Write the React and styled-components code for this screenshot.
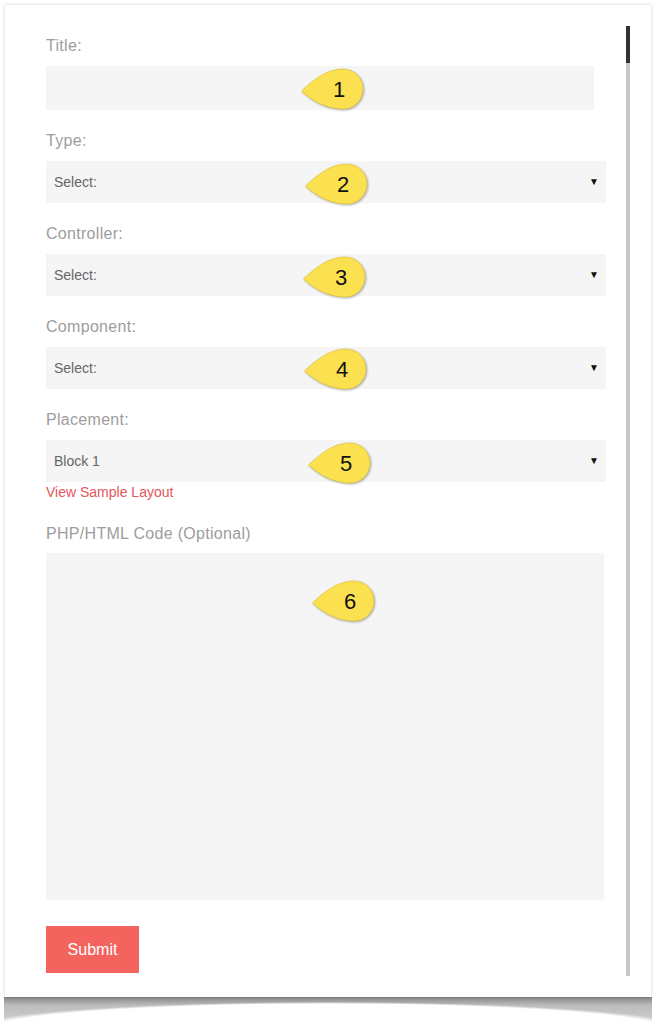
import React from 'react';
import styled, { createGlobalStyle } from 'styled-components';

const GlobalStyle = createGlobalStyle`
  html, body {
    margin: 0;
    padding: 0;
    background: #ffffff;
  }

  body {
    font-family: "Liberation Sans", Arial, sans-serif;
  }
`;

const Page = styled.div`
  padding: 5px 13px 30px 5px;
`;

const Card = styled.div`
  position: relative;
  width: 646px;
  box-sizing: border-box;
  display: flex;
  gap: 20px;
  padding: 21px 21px 21px 41px;
  background: #ffffff;
  box-shadow: 0 0 3px rgba(0, 0, 0, 0.22);

  /* curled paper shadow under the card */
  &::after {
    content: '';
    position: absolute;
    top: 100%;
    left: -1px;
    right: -1px;
    height: 24px;
    background: linear-gradient(
      to bottom,
      rgba(0, 0, 0, 0.48),
      rgba(0, 0, 0, 0.26) 35%,
      rgba(0, 0, 0, 0.2)
    );
    -webkit-mask-image: radial-gradient(ellipse 360px 27px at 50% 32px, transparent 93%, #000 100%);
    mask-image: radial-gradient(ellipse 360px 27px at 50% 32px, transparent 93%, #000 100%);
  }
`;

const FormColumn = styled.form`
  width: 560px;
  display: flex;
  flex-direction: column;
  padding: 10px 0 3px;
`;

const Field = styled.div`
  display: flex;
  flex-direction: column;
  margin-bottom: ${p => p.$gap}px;
`;

const Label = styled.label`
  font-size: 16px;
  line-height: 20px;
  letter-spacing: 0.3px;
  color: #9d9d9d;
  margin-bottom: ${p => p.$space || 10}px;
`;

const Control = styled.div`
  position: relative;
  box-sizing: border-box;
  width: ${p => p.$width}px;
  height: ${p => p.$height}px;
  background: #f5f5f5;
  display: flex;
  align-items: center;
  justify-content: space-between;
  padding: 0 7px 0 8px;
  font-size: 14px;
  color: #666666;
`;

const Arrow = styled.span`
  font-size: 10px;
  color: #111111;
  margin-top: -2px;
`;

const SampleLink = styled.a`
  font-size: 14px;
  line-height: 18px;
  color: #e5565c;
  text-decoration: none;
  margin: 1px 0 23px;
`;

const SubmitButton = styled.button`
  width: 93px;
  height: 47px;
  margin-top: 26px;
  border: none;
  background: #f4645f;
  color: #ffffff;
  font-family: "Liberation Sans", Arial, sans-serif;
  font-size: 16px;
  cursor: pointer;
`;

const ScrollTrack = styled.div`
  width: 4px;
  flex-shrink: 0;
  background: #c7c7c7;
  display: flex;
  flex-direction: column;
`;

const ScrollThumb = styled.div`
  height: 37px;
  background: #333333;
`;

const Callout = styled.span`
  position: absolute;
  left: ${p => p.$left}px;
  top: ${p => p.$top}px;
  width: 64px;
  height: 42px;
  display: flex;
  align-items: center;
  justify-content: center;
  padding-left: 14px;
  box-sizing: border-box;

  svg {
    position: absolute;
    left: 0;
    top: 0;
    filter: drop-shadow(1px 1.5px 1.2px rgba(0, 0, 0, 0.3));
  }
`;

const CalloutNumber = styled.span`
  position: relative;
  font-family: "Liberation Sans", Arial, sans-serif;
  font-size: 22px;
  color: #111111;
  margin-top: 1px;
`;

const Pin = ({ n, left, top }) => (
  <Callout $left={left} $top={top}>
    <svg width="64" height="42" viewBox="0 0 64 42">
      <path
        d="M1.5 23 C 12 13, 26 1, 43 1 A 20 20 0 0 1 43 41 C 27 41, 12 33, 1.5 23 Z"
        fill="#fbe04f"
        stroke="#d9bd2e"
        strokeWidth="0.6"
      />
    </svg>
    <CalloutNumber>{n}</CalloutNumber>
  </Callout>
);

const selects = [
  { label: 'Type:', value: 'Select:', pin: 2, left: 258, top: 2 },
  { label: 'Controller:', value: 'Select:', pin: 3, left: 256, top: 2 },
  { label: 'Component:', value: 'Select:', pin: 4, left: 257, top: 1 },
];

export default function App() {
  return (
    <Page>
      <GlobalStyle />
      <Card>
        <FormColumn onSubmit={e => e.preventDefault()}>
          <Field $gap={21}>
            <Label>Title:</Label>
            <Control $width={548} $height={44}>
              <Pin n={1} left={254} top={2} />
            </Control>
          </Field>

          {selects.map(s => (
            <Field $gap={21} key={s.label}>
              <Label>{s.label}</Label>
              <Control $width={560} $height={42}>
                {s.value}
                <Arrow>▼</Arrow>
                <Pin n={s.pin} left={s.left} top={s.top} />
              </Control>
            </Field>
          ))}

          <Field $gap={0}>
            <Label>Placement:</Label>
            <Control $width={560} $height={42}>
              Block 1
              <Arrow>▼</Arrow>
              <Pin n={5} left={261} top={2} />
            </Control>
          </Field>
          <SampleLink href="#">View Sample Layout</SampleLink>

          <Field $gap={0}>
            <Label $space={9}>PHP/HTML Code (Optional)</Label>
            <Control $width={558} $height={347}>
              <Pin n={6} left={265} top={27} />
            </Control>
          </Field>

          <SubmitButton type="submit">Submit</SubmitButton>
        </FormColumn>

        <ScrollTrack>
          <ScrollThumb />
        </ScrollTrack>
      </Card>
    </Page>
  );
}
